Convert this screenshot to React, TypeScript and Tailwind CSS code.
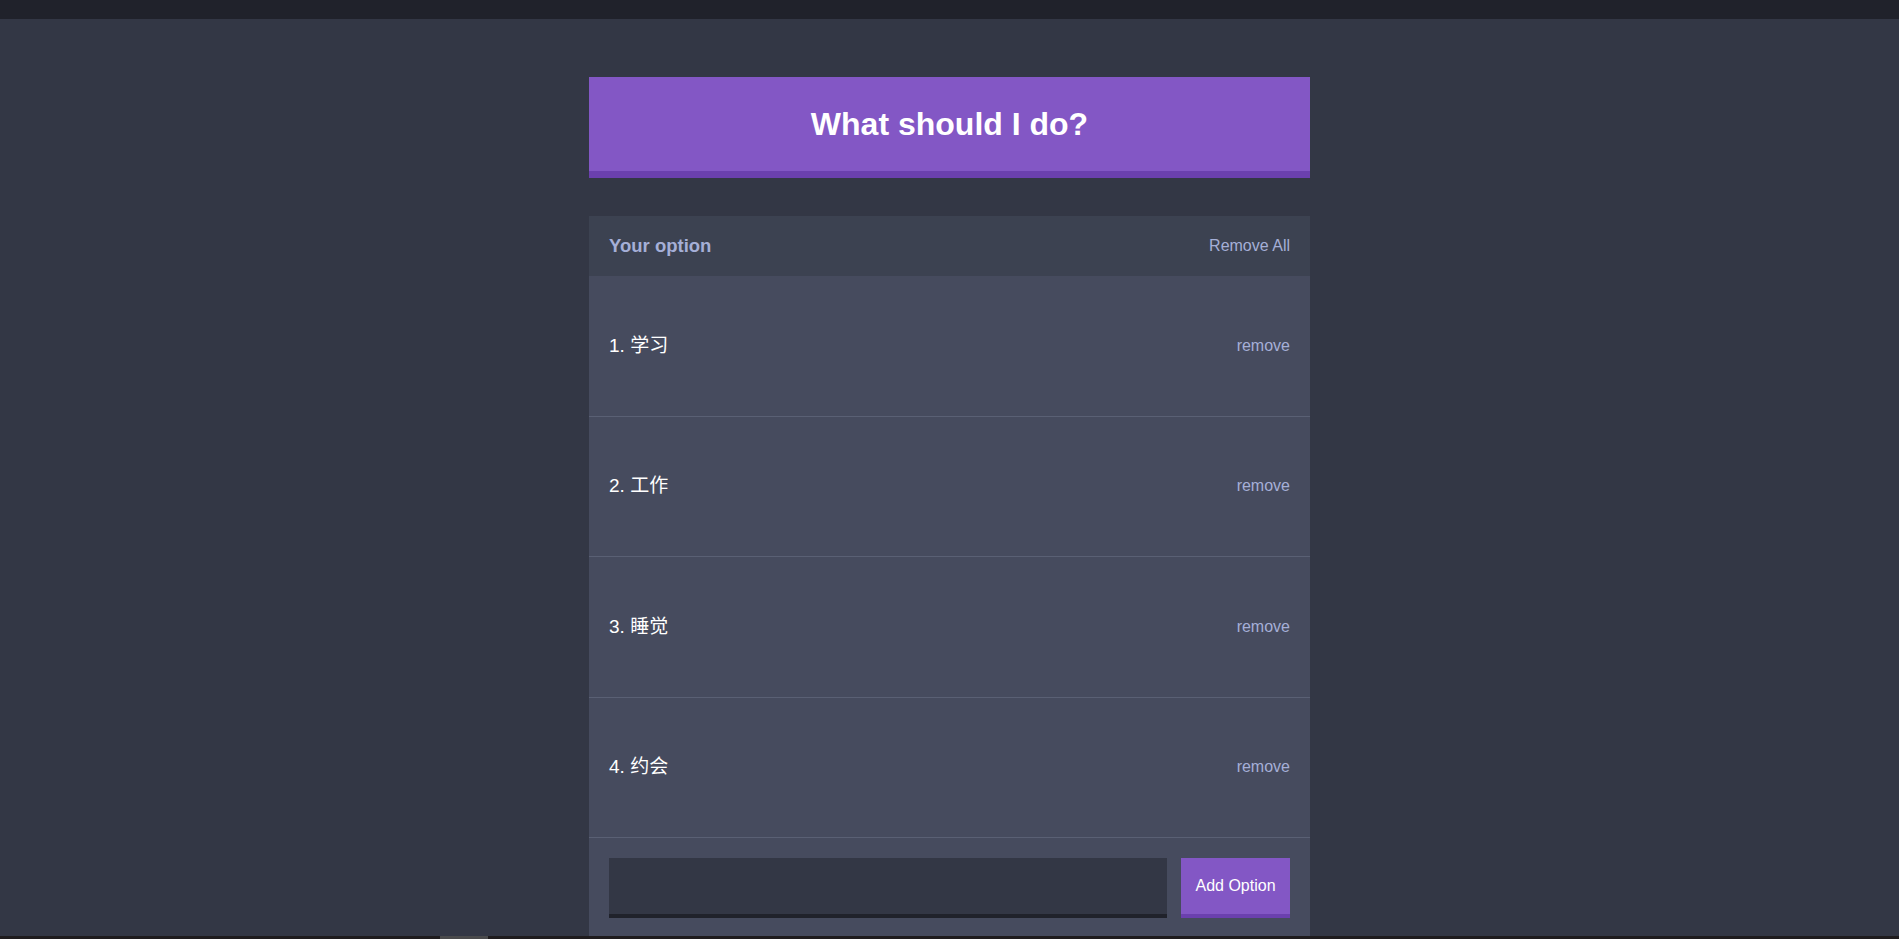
import React from "react";

const options = ["学习", "工作", "睡觉", "约会"];

export default function App() {
  return (
    <div className="min-h-screen bg-[#333745] font-['Liberation_Sans','Noto_Sans_CJK_SC',Arial,sans-serif]">
      <div className="h-[19px] bg-[#20222b]" />
      <div className="mx-auto w-[721px] pt-[58px] pb-[40px]">
        <div className="flex h-[101px] items-center justify-center border-b-[7px] border-[#6b40ae] bg-[#8357c5]">
          <h1 className="text-[32px] font-bold leading-none text-white">What should I do?</h1>
        </div>
        <div className="mt-[38px] bg-[#464b5e]">
          <div className="flex h-[60px] items-center justify-between bg-[#3c4251] px-5">
            <h3 className="text-[18.5px] font-bold text-[#a5afd7]">Your option</h3>
            <button className="text-[16px] text-[#a5afd7]">Remove All</button>
          </div>
          {options.map((o, i) => (
            <div
              key={o}
              className="flex h-[140.5px] items-center justify-between border-b border-[#5a6074] px-5"
            >
              <p className="text-[19px] text-white">
                {i + 1}. {o}
              </p>
              <button className="text-[16px] text-[#a5afd7]">remove</button>
            </div>
          ))}
          <form className="flex gap-[14px] p-5" onSubmit={(e) => e.preventDefault()}>
            <input
              type="text"
              className="h-[60px] flex-1 border-b-4 border-[#20222b] bg-[#333745] px-3 text-white outline-none"
            />
            <button className="h-[60px] w-[109px] border-b-4 border-[#6b40ae] bg-[#8357c5] text-[16px] text-white">
              Add Option
            </button>
          </form>
        </div>
      </div>
      <div className="fixed bottom-0 left-0 h-[3px] w-full bg-[#1f1c1e]">
        <div className="ml-[440px] h-full w-[48px] bg-[#4a4a4c]" />
      </div>
    </div>
  );
}
